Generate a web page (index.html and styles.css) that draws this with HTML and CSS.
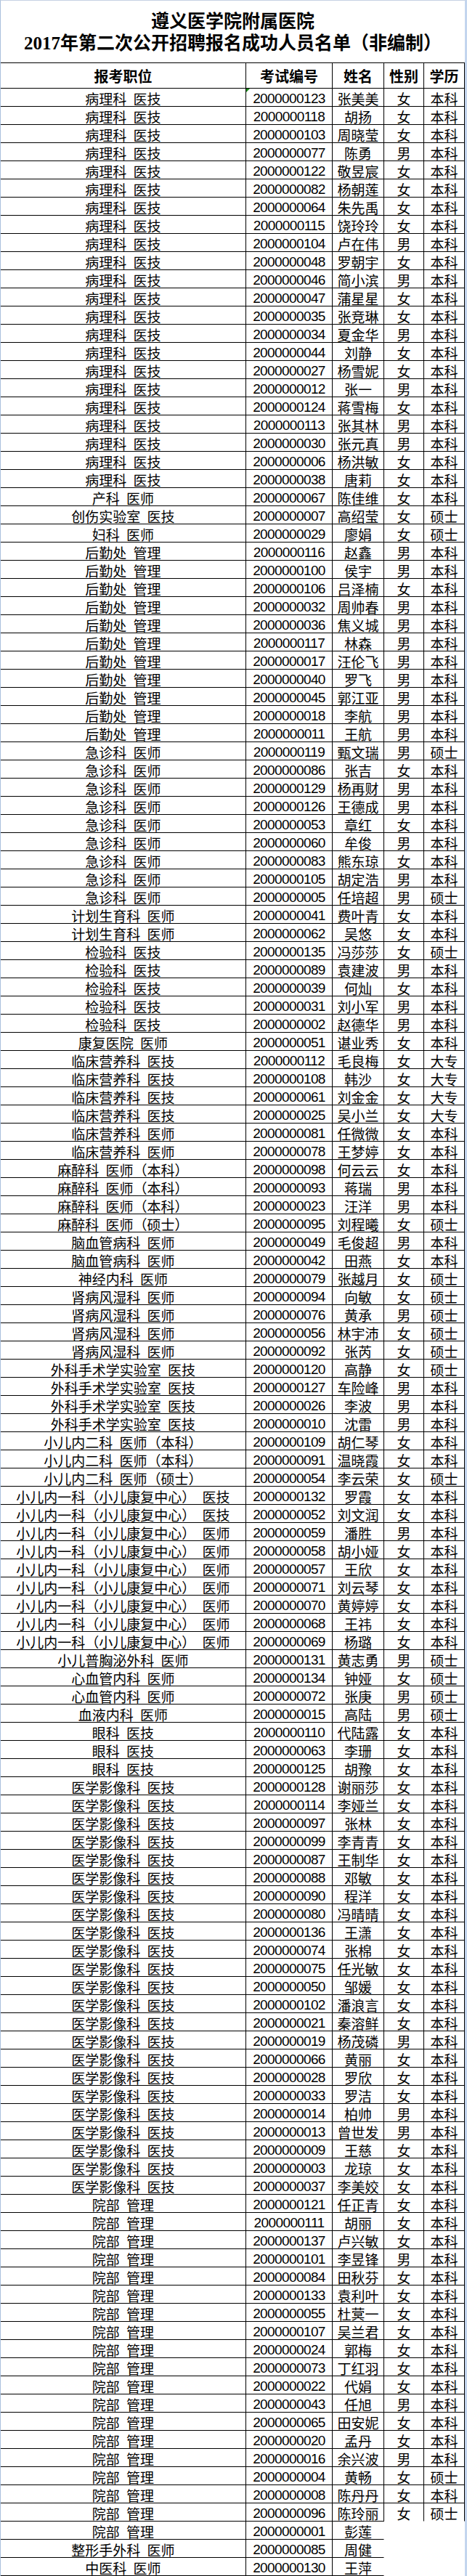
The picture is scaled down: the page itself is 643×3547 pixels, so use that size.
FILE: index.html
```html
<!DOCTYPE html>
<html lang="zh-CN">
<head>
<meta charset="utf-8">
<title>遵义医学院附属医院2017年第二次公开招聘报名成功人员名单（非编制）</title>
<link rel="stylesheet" href="styles.css">
</head>
<body>
<div class="sheet">
  <div class="title">
    <div>遵义医学院附属医院</div>
    <div>2017年第二次公开招聘报名成功人员名单（非编制）</div>
  </div>
  <div class="table">
    <div class="row head"><span>报考职位</span><span>考试编号</span><span>姓名</span><span>性别</span><span>学历</span></div>
    <div class="row"><span>病理科 医技</span><span class="num flag">2000000123</span><span>张美美</span><span>女</span><span>本科</span></div>
    <div class="row"><span>病理科 医技</span><span class="num">2000000118</span><span>胡扬</span><span>女</span><span>本科</span></div>
    <div class="row"><span>病理科 医技</span><span class="num">2000000103</span><span>周晓莹</span><span>女</span><span>本科</span></div>
    <div class="row"><span>病理科 医技</span><span class="num">2000000077</span><span>陈勇</span><span>男</span><span>本科</span></div>
    <div class="row"><span>病理科 医技</span><span class="num">2000000122</span><span>敬昱宸</span><span>女</span><span>本科</span></div>
    <div class="row"><span>病理科 医技</span><span class="num">2000000082</span><span>杨朝莲</span><span>女</span><span>本科</span></div>
    <div class="row"><span>病理科 医技</span><span class="num">2000000064</span><span>朱先禹</span><span>女</span><span>本科</span></div>
    <div class="row"><span>病理科 医技</span><span class="num">2000000115</span><span>饶玲玲</span><span>女</span><span>本科</span></div>
    <div class="row"><span>病理科 医技</span><span class="num">2000000104</span><span>卢在伟</span><span>男</span><span>本科</span></div>
    <div class="row"><span>病理科 医技</span><span class="num">2000000048</span><span>罗朝宇</span><span>女</span><span>本科</span></div>
    <div class="row"><span>病理科 医技</span><span class="num">2000000046</span><span>简小滨</span><span>男</span><span>本科</span></div>
    <div class="row"><span>病理科 医技</span><span class="num">2000000047</span><span>蒲星星</span><span>女</span><span>本科</span></div>
    <div class="row"><span>病理科 医技</span><span class="num">2000000035</span><span>张竞琳</span><span>女</span><span>本科</span></div>
    <div class="row"><span>病理科 医技</span><span class="num">2000000034</span><span>夏金华</span><span>男</span><span>本科</span></div>
    <div class="row"><span>病理科 医技</span><span class="num">2000000044</span><span>刘静</span><span>女</span><span>本科</span></div>
    <div class="row"><span>病理科 医技</span><span class="num">2000000027</span><span>杨雪妮</span><span>女</span><span>本科</span></div>
    <div class="row"><span>病理科 医技</span><span class="num">2000000012</span><span>张一</span><span>男</span><span>本科</span></div>
    <div class="row"><span>病理科 医技</span><span class="num">2000000124</span><span>蒋雪梅</span><span>女</span><span>本科</span></div>
    <div class="row"><span>病理科 医技</span><span class="num">2000000113</span><span>张其林</span><span>男</span><span>本科</span></div>
    <div class="row"><span>病理科 医技</span><span class="num">2000000030</span><span>张元真</span><span>男</span><span>本科</span></div>
    <div class="row"><span>病理科 医技</span><span class="num">2000000006</span><span>杨洪敏</span><span>女</span><span>本科</span></div>
    <div class="row"><span>病理科 医技</span><span class="num">2000000038</span><span>唐莉</span><span>女</span><span>本科</span></div>
    <div class="row"><span>产科 医师</span><span class="num">2000000067</span><span>陈佳维</span><span>女</span><span>本科</span></div>
    <div class="row"><span>创伤实验室 医技</span><span class="num">2000000007</span><span>高绍莹</span><span>女</span><span>硕士</span></div>
    <div class="row"><span>妇科 医师</span><span class="num">2000000029</span><span>廖娟</span><span>女</span><span>硕士</span></div>
    <div class="row"><span>后勤处 管理</span><span class="num">2000000116</span><span>赵鑫</span><span>男</span><span>本科</span></div>
    <div class="row"><span>后勤处 管理</span><span class="num">2000000100</span><span>侯宇</span><span>男</span><span>本科</span></div>
    <div class="row"><span>后勤处 管理</span><span class="num">2000000106</span><span>吕泽楠</span><span>女</span><span>本科</span></div>
    <div class="row"><span>后勤处 管理</span><span class="num">2000000032</span><span>周帅春</span><span>男</span><span>本科</span></div>
    <div class="row"><span>后勤处 管理</span><span class="num">2000000036</span><span>焦义城</span><span>男</span><span>本科</span></div>
    <div class="row"><span>后勤处 管理</span><span class="num">2000000117</span><span>林森</span><span>男</span><span>本科</span></div>
    <div class="row"><span>后勤处 管理</span><span class="num">2000000017</span><span>汪伦飞</span><span>男</span><span>本科</span></div>
    <div class="row"><span>后勤处 管理</span><span class="num">2000000040</span><span>罗飞</span><span>男</span><span>本科</span></div>
    <div class="row"><span>后勤处 管理</span><span class="num">2000000045</span><span>郭江亚</span><span>男</span><span>本科</span></div>
    <div class="row"><span>后勤处 管理</span><span class="num">2000000018</span><span>李航</span><span>男</span><span>本科</span></div>
    <div class="row"><span>后勤处 管理</span><span class="num">2000000011</span><span>王航</span><span>男</span><span>本科</span></div>
    <div class="row"><span>急诊科 医师</span><span class="num">2000000119</span><span>甄文瑞</span><span>男</span><span>硕士</span></div>
    <div class="row"><span>急诊科 医师</span><span class="num">2000000086</span><span>张吉</span><span>女</span><span>本科</span></div>
    <div class="row"><span>急诊科 医师</span><span class="num">2000000129</span><span>杨再财</span><span>男</span><span>本科</span></div>
    <div class="row"><span>急诊科 医师</span><span class="num">2000000126</span><span>王德成</span><span>男</span><span>本科</span></div>
    <div class="row"><span>急诊科 医师</span><span class="num">2000000053</span><span>章红</span><span>女</span><span>本科</span></div>
    <div class="row"><span>急诊科 医师</span><span class="num">2000000060</span><span>牟俊</span><span>男</span><span>本科</span></div>
    <div class="row"><span>急诊科 医师</span><span class="num">2000000083</span><span>熊东琼</span><span>女</span><span>本科</span></div>
    <div class="row"><span>急诊科 医师</span><span class="num">2000000105</span><span>胡定浩</span><span>男</span><span>本科</span></div>
    <div class="row"><span>急诊科 医师</span><span class="num">2000000005</span><span>任培超</span><span>男</span><span>硕士</span></div>
    <div class="row"><span>计划生育科 医师</span><span class="num">2000000041</span><span>费叶青</span><span>女</span><span>本科</span></div>
    <div class="row"><span>计划生育科 医师</span><span class="num">2000000062</span><span>吴悠</span><span>女</span><span>本科</span></div>
    <div class="row"><span>检验科 医技</span><span class="num">2000000135</span><span>冯莎莎</span><span>女</span><span>硕士</span></div>
    <div class="row"><span>检验科 医技</span><span class="num">2000000089</span><span>袁建波</span><span>男</span><span>本科</span></div>
    <div class="row"><span>检验科 医技</span><span class="num">2000000039</span><span>何灿</span><span>女</span><span>本科</span></div>
    <div class="row"><span>检验科 医技</span><span class="num">2000000031</span><span>刘小军</span><span>男</span><span>本科</span></div>
    <div class="row"><span>检验科 医技</span><span class="num">2000000002</span><span>赵德华</span><span>男</span><span>本科</span></div>
    <div class="row"><span>康复医院 医师</span><span class="num">2000000051</span><span>谌业秀</span><span>女</span><span>本科</span></div>
    <div class="row"><span>临床营养科 医技</span><span class="num">2000000112</span><span>毛良梅</span><span>女</span><span>大专</span></div>
    <div class="row"><span>临床营养科 医技</span><span class="num">2000000108</span><span>韩沙</span><span>女</span><span>大专</span></div>
    <div class="row"><span>临床营养科 医技</span><span class="num">2000000061</span><span>刘金金</span><span>女</span><span>大专</span></div>
    <div class="row"><span>临床营养科 医技</span><span class="num">2000000025</span><span>吴小兰</span><span>女</span><span>大专</span></div>
    <div class="row"><span>临床营养科 医师</span><span class="num">2000000081</span><span>任微微</span><span>女</span><span>本科</span></div>
    <div class="row"><span>临床营养科 医师</span><span class="num">2000000078</span><span>王梦婷</span><span>女</span><span>本科</span></div>
    <div class="row"><span>麻醉科 医师（本科）</span><span class="num">2000000098</span><span>何云云</span><span>女</span><span>本科</span></div>
    <div class="row"><span>麻醉科 医师（本科）</span><span class="num">2000000093</span><span>蒋瑞</span><span>男</span><span>本科</span></div>
    <div class="row"><span>麻醉科 医师（本科）</span><span class="num">2000000023</span><span>汪洋</span><span>男</span><span>本科</span></div>
    <div class="row"><span>麻醉科 医师（硕士）</span><span class="num">2000000095</span><span>刘程曦</span><span>女</span><span>硕士</span></div>
    <div class="row"><span>脑血管病科 医师</span><span class="num">2000000049</span><span>毛俊超</span><span>男</span><span>本科</span></div>
    <div class="row"><span>脑血管病科 医师</span><span class="num">2000000042</span><span>田燕</span><span>女</span><span>本科</span></div>
    <div class="row"><span>神经内科 医师</span><span class="num">2000000079</span><span>张越月</span><span>女</span><span>硕士</span></div>
    <div class="row"><span>肾病风湿科 医师</span><span class="num">2000000094</span><span>向敏</span><span>女</span><span>硕士</span></div>
    <div class="row"><span>肾病风湿科 医师</span><span class="num">2000000076</span><span>黄承</span><span>男</span><span>硕士</span></div>
    <div class="row"><span>肾病风湿科 医师</span><span class="num">2000000056</span><span>林宇沛</span><span>女</span><span>硕士</span></div>
    <div class="row"><span>肾病风湿科 医师</span><span class="num">2000000092</span><span>张芮</span><span>女</span><span>硕士</span></div>
    <div class="row"><span>外科手术学实验室 医技</span><span class="num">2000000120</span><span>高静</span><span>女</span><span>硕士</span></div>
    <div class="row"><span>外科手术学实验室 医技</span><span class="num">2000000127</span><span>车险峰</span><span>男</span><span>本科</span></div>
    <div class="row"><span>外科手术学实验室 医技</span><span class="num">2000000026</span><span>李波</span><span>男</span><span>本科</span></div>
    <div class="row"><span>外科手术学实验室 医技</span><span class="num">2000000010</span><span>沈雷</span><span>男</span><span>本科</span></div>
    <div class="row"><span>小儿内二科 医师（本科）</span><span class="num">2000000109</span><span>胡仁琴</span><span>女</span><span>本科</span></div>
    <div class="row"><span>小儿内二科 医师（本科）</span><span class="num">2000000091</span><span>温晓霞</span><span>女</span><span>本科</span></div>
    <div class="row"><span>小儿内二科 医师（硕士）</span><span class="num">2000000054</span><span>李云荣</span><span>女</span><span>硕士</span></div>
    <div class="row"><span>小儿内一科（小儿康复中心） 医技</span><span class="num">2000000132</span><span>罗霞</span><span>女</span><span>本科</span></div>
    <div class="row"><span>小儿内一科（小儿康复中心） 医技</span><span class="num">2000000052</span><span>刘文润</span><span>女</span><span>本科</span></div>
    <div class="row"><span>小儿内一科（小儿康复中心） 医师</span><span class="num">2000000059</span><span>潘胜</span><span>男</span><span>本科</span></div>
    <div class="row"><span>小儿内一科（小儿康复中心） 医师</span><span class="num">2000000058</span><span>胡小娅</span><span>女</span><span>本科</span></div>
    <div class="row"><span>小儿内一科（小儿康复中心） 医师</span><span class="num">2000000057</span><span>王欣</span><span>女</span><span>本科</span></div>
    <div class="row"><span>小儿内一科（小儿康复中心） 医师</span><span class="num">2000000071</span><span>刘云琴</span><span>女</span><span>本科</span></div>
    <div class="row"><span>小儿内一科（小儿康复中心） 医师</span><span class="num">2000000070</span><span>黄婷婷</span><span>女</span><span>本科</span></div>
    <div class="row"><span>小儿内一科（小儿康复中心） 医师</span><span class="num">2000000068</span><span>王祎</span><span>女</span><span>本科</span></div>
    <div class="row"><span>小儿内一科（小儿康复中心） 医师</span><span class="num">2000000069</span><span>杨璐</span><span>女</span><span>本科</span></div>
    <div class="row"><span>小儿普胸泌外科 医师</span><span class="num">2000000131</span><span>黄志勇</span><span>男</span><span>硕士</span></div>
    <div class="row"><span>心血管内科 医师</span><span class="num">2000000134</span><span>钟娅</span><span>女</span><span>硕士</span></div>
    <div class="row"><span>心血管内科 医师</span><span class="num">2000000072</span><span>张庚</span><span>男</span><span>硕士</span></div>
    <div class="row"><span>血液内科 医师</span><span class="num">2000000015</span><span>高陆</span><span>男</span><span>硕士</span></div>
    <div class="row"><span>眼科 医技</span><span class="num">2000000110</span><span>代陆露</span><span>女</span><span>本科</span></div>
    <div class="row"><span>眼科 医技</span><span class="num">2000000063</span><span>李珊</span><span>女</span><span>本科</span></div>
    <div class="row"><span>眼科 医技</span><span class="num">2000000125</span><span>胡豫</span><span>女</span><span>本科</span></div>
    <div class="row"><span>医学影像科 医技</span><span class="num">2000000128</span><span>谢丽莎</span><span>女</span><span>本科</span></div>
    <div class="row"><span>医学影像科 医技</span><span class="num">2000000114</span><span>李娅兰</span><span>女</span><span>本科</span></div>
    <div class="row"><span>医学影像科 医技</span><span class="num">2000000097</span><span>张林</span><span>女</span><span>本科</span></div>
    <div class="row"><span>医学影像科 医技</span><span class="num">2000000099</span><span>李青青</span><span>女</span><span>本科</span></div>
    <div class="row"><span>医学影像科 医技</span><span class="num">2000000087</span><span>王制华</span><span>女</span><span>本科</span></div>
    <div class="row"><span>医学影像科 医技</span><span class="num">2000000088</span><span>邓敏</span><span>女</span><span>本科</span></div>
    <div class="row"><span>医学影像科 医技</span><span class="num">2000000090</span><span>程洋</span><span>女</span><span>本科</span></div>
    <div class="row"><span>医学影像科 医技</span><span class="num">2000000080</span><span>冯晴晴</span><span>女</span><span>本科</span></div>
    <div class="row"><span>医学影像科 医技</span><span class="num">2000000136</span><span>王潇</span><span>女</span><span>本科</span></div>
    <div class="row"><span>医学影像科 医技</span><span class="num">2000000074</span><span>张棉</span><span>女</span><span>本科</span></div>
    <div class="row"><span>医学影像科 医技</span><span class="num">2000000075</span><span>任光敏</span><span>女</span><span>本科</span></div>
    <div class="row"><span>医学影像科 医技</span><span class="num">2000000050</span><span>邹媛</span><span>女</span><span>本科</span></div>
    <div class="row"><span>医学影像科 医技</span><span class="num">2000000102</span><span>潘浪言</span><span>女</span><span>本科</span></div>
    <div class="row"><span>医学影像科 医技</span><span class="num">2000000021</span><span>秦溶鲜</span><span>女</span><span>本科</span></div>
    <div class="row"><span>医学影像科 医技</span><span class="num">2000000019</span><span>杨茂磷</span><span>男</span><span>本科</span></div>
    <div class="row"><span>医学影像科 医技</span><span class="num">2000000066</span><span>黄丽</span><span>女</span><span>本科</span></div>
    <div class="row"><span>医学影像科 医技</span><span class="num">2000000028</span><span>罗欣</span><span>女</span><span>本科</span></div>
    <div class="row"><span>医学影像科 医技</span><span class="num">2000000033</span><span>罗洁</span><span>女</span><span>本科</span></div>
    <div class="row"><span>医学影像科 医技</span><span class="num">2000000014</span><span>柏帅</span><span>男</span><span>本科</span></div>
    <div class="row"><span>医学影像科 医技</span><span class="num">2000000013</span><span>曾世发</span><span>男</span><span>本科</span></div>
    <div class="row"><span>医学影像科 医技</span><span class="num">2000000009</span><span>王慈</span><span>女</span><span>本科</span></div>
    <div class="row"><span>医学影像科 医技</span><span class="num">2000000003</span><span>龙琼</span><span>女</span><span>本科</span></div>
    <div class="row"><span>医学影像科 医技</span><span class="num">2000000037</span><span>李美姣</span><span>女</span><span>本科</span></div>
    <div class="row"><span>院部 管理</span><span class="num">2000000121</span><span>任正青</span><span>女</span><span>本科</span></div>
    <div class="row"><span>院部 管理</span><span class="num">2000000111</span><span>胡丽</span><span>女</span><span>本科</span></div>
    <div class="row"><span>院部 管理</span><span class="num">2000000137</span><span>卢兴敏</span><span>女</span><span>本科</span></div>
    <div class="row"><span>院部 管理</span><span class="num">2000000101</span><span>李昱锋</span><span>男</span><span>本科</span></div>
    <div class="row"><span>院部 管理</span><span class="num">2000000084</span><span>田秋芬</span><span>女</span><span>本科</span></div>
    <div class="row"><span>院部 管理</span><span class="num">2000000133</span><span>袁利叶</span><span>女</span><span>本科</span></div>
    <div class="row"><span>院部 管理</span><span class="num">2000000055</span><span>杜蓂一</span><span>女</span><span>本科</span></div>
    <div class="row"><span>院部 管理</span><span class="num">2000000107</span><span>吴兰君</span><span>女</span><span>本科</span></div>
    <div class="row"><span>院部 管理</span><span class="num">2000000024</span><span>郭梅</span><span>女</span><span>本科</span></div>
    <div class="row"><span>院部 管理</span><span class="num">2000000073</span><span>丁红羽</span><span>女</span><span>本科</span></div>
    <div class="row"><span>院部 管理</span><span class="num">2000000022</span><span>代娟</span><span>女</span><span>本科</span></div>
    <div class="row"><span>院部 管理</span><span class="num">2000000043</span><span>任旭</span><span>男</span><span>本科</span></div>
    <div class="row"><span>院部 管理</span><span class="num">2000000065</span><span>田安妮</span><span>女</span><span>本科</span></div>
    <div class="row"><span>院部 管理</span><span class="num">2000000020</span><span>孟丹</span><span>女</span><span>本科</span></div>
    <div class="row"><span>院部 管理</span><span class="num">2000000016</span><span>余兴波</span><span>男</span><span>本科</span></div>
    <div class="row"><span>院部 管理</span><span class="num">2000000004</span><span>黄畅</span><span>女</span><span>硕士</span></div>
    <div class="row"><span>院部 管理</span><span class="num">2000000008</span><span>陈丹丹</span><span>女</span><span>本科</span></div>
    <div class="row"><span>院部 管理</span><span class="num">2000000096</span><span>陈玲丽</span><span class="open">女</span><span class="open">硕士</span></div>
    <div class="row"><span>院部 管理</span><span class="num">2000000001</span><span class="edge">彭莲</span></div>
    <div class="row"><span>整形手外科 医师</span><span class="num">2000000085</span><span class="edge">周健</span></div>
    <div class="row"><span>中医科 医师</span><span class="num">2000000130</span><span class="edge">王萍</span></div>
  </div>
</div>
</body>
</html>
```

FILE: styles.css
```css
html, body {
  margin: 0;
  padding: 0;
  background: #ffffff;
}

body {
  font-family: "Noto Sans CJK SC", "Noto Sans", sans-serif;
  color: #000000;
}

.sheet {
  width: 639px;
  border-top: 1px solid #c6d2e3;
  border-left: 1px solid #a9bfdd;
  border-right: 3px solid #c3d5ee;
}

.title {
  height: 85px;
  box-sizing: border-box;
  padding-top: 14px;
  text-align: center;
  font-family: "Liberation Serif", "Noto Sans CJK SC", serif;
  font-weight: 700;
  font-size: 25px;
  line-height: 30px;
  white-space: nowrap;
}

.table {
  width: 639px;
  border-top: 1px solid #000000;
}

.row {
  display: grid;
  grid-template-columns: 338px 119px 71px 55px 56px;
  height: 25px;
}

.row > span {
  display: block;
  box-sizing: border-box;
  height: 25px;
  padding-top: 3px;
  border-right: 1px solid #000000;
  border-bottom: 1px solid #000000;
  text-align: center;
  font-size: 19px;
  line-height: 21px;
  word-spacing: 5px;
  white-space: nowrap;
}

.row.head {
  height: 35px;
}

.row.head > span {
  height: 35px;
  padding-top: 0;
  font-size: 20px;
  font-weight: 700;
  line-height: 35px;
}

.row > span.num {
  font-family: "Liberation Sans", sans-serif;
  font-size: 19px;
  letter-spacing: -0.6px;
  word-spacing: 0;
  padding-top: 4px;
  line-height: 20px;
}

.row > span.flag {
  position: relative;
}

.row > span.flag::before {
  content: "";
  position: absolute;
  left: 0;
  top: 0;
  width: 0;
  height: 0;
  border-top: 5px solid #1a8c1a;
  border-right: 5px solid transparent;
}

.row > span.open {
  border-bottom-color: transparent;
}

.row > span.edge {
  border-right-color: transparent;
}
```
